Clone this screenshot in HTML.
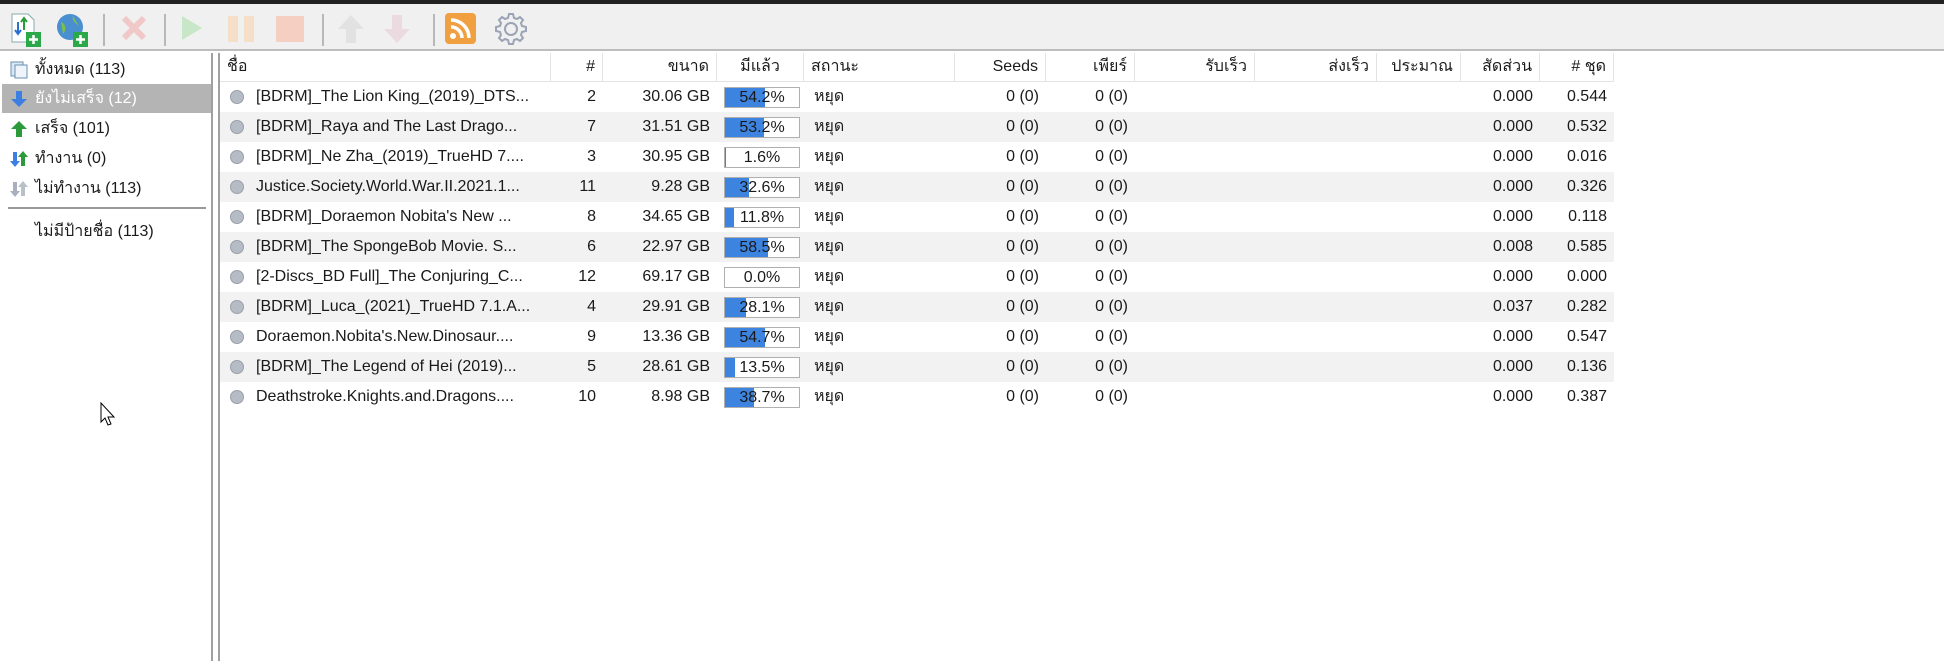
<!DOCTYPE html><html><head><meta charset="utf-8"><style>
*{margin:0;padding:0;box-sizing:border-box}
body{width:1944px;height:661px;background:#fff;font-family:"Liberation Sans","Noto Sans CJK SC",sans-serif;font-size:16px;color:#1a1a1a;position:relative;overflow:hidden}
.top{position:absolute;left:0;top:0;width:1944px;height:4px;background:#222}
.tb{position:absolute;left:0;top:4px;width:1944px;height:47px;background:#f0f0f0;border-bottom:2px solid #bdbdbd}
.sep{position:absolute;top:10px;width:2px;height:32px;background:#b8b8b8}
.ic{position:absolute;top:8px}
.side{position:absolute;left:0;top:53px;width:213px;height:608px;border-right:2px solid #a0a0a0;background:#fff}
.si{position:absolute;left:2px;width:209px;height:29px;line-height:29px;padding-left:33px;font-size:16px}
.si.sel{background:#b4b4b4;color:#fff}
.si svg{position:absolute;left:8px;top:6px}
.main{position:absolute;left:218px;top:53px;width:1726px;height:608px;border-left:2px solid #a0a0a0}
.hd{position:absolute;top:0;height:29px;line-height:28px;border-right:1px solid #e3e3e3;border-bottom:1px solid #e3e3e3;padding:0 7px;font-size:16px;white-space:nowrap}
.row{position:absolute;left:0;width:1394px;height:30px;line-height:30px}
.row.g{background:#f2f2f2}
.c{position:absolute;top:0;white-space:nowrap;overflow:hidden}
.r{text-align:right}
.dot{position:absolute;left:10px;top:8px;width:14px;height:14px;border-radius:50%;background:#b6bcc6;border:1px solid #9aa0a8}
.pb{position:absolute;left:504px;top:5px;width:76px;height:21px;border:1px solid #b0b0b0;background:#fff;text-align:center;line-height:19px}
.pb i{position:absolute;left:0;top:0;bottom:0;background:#3d84e0}
.pb span{position:relative}
</style></head><body>
<div class="top"></div>
<div class="tb">
<svg class="ic" style="left:8px" width="36" height="36" viewBox="0 0 36 36"><path d="M4 2h16l6 6v22H4z" fill="#fff" stroke="#8aa" /><path d="M10 10v12M7 18l3 4 3-4" stroke="#2a6fd0" stroke-width="2" fill="none"/><path d="M16 18V6M13 10l3-4 3 4" stroke="#2a9a3a" stroke-width="2" fill="none"/><rect x="18" y="20" width="15" height="15" fill="#2aa84a"/><path d="M25.5 23v9M21 27.5h9" stroke="#fff" stroke-width="2.5"/></svg>
<svg class="ic" style="left:55px" width="36" height="36" viewBox="0 0 36 36"><circle cx="15" cy="15" r="13" fill="#4a8fd0"/><path d="M6 10c5 2 6 8 2 12M18 4c-2 6 6 8 8 14" fill="#7cbf4a"/><rect x="18" y="20" width="15" height="15" fill="#2aa84a"/><path d="M25.5 23v9M21 27.5h9" stroke="#fff" stroke-width="2.5"/></svg>
<div class="sep" style="left:103px"></div>
<svg class="ic" style="left:118px" width="32" height="32" viewBox="0 0 32 32"><path d="M6 6l20 20M26 6L6 26" stroke="#f0c8c8" stroke-width="6"/></svg>
<div class="sep" style="left:164px"></div>
<svg class="ic" style="left:178px" width="28" height="32" viewBox="0 0 28 32"><path d="M4 4l20 12L4 28z" fill="#c8e6c8"/></svg>
<svg class="ic" style="left:224px" width="34" height="32" viewBox="0 0 34 32"><rect x="4" y="4" width="10" height="26" fill="#f6dfc8"/><rect x="20" y="4" width="10" height="26" fill="#f6dfc8"/></svg>
<svg class="ic" style="left:273px" width="34" height="32" viewBox="0 0 34 32"><rect x="3" y="4" width="28" height="26" fill="#f4cfc2"/></svg>
<div class="sep" style="left:322px"></div>
<svg class="ic" style="left:334px" width="34" height="34" viewBox="0 0 34 34"><path d="M17 3L4 17h8v14h10V17h8z" fill="#e2e2e2"/></svg>
<svg class="ic" style="left:380px" width="34" height="34" viewBox="0 0 34 34"><path d="M17 31L4 17h8V3h10v14h8z" fill="#ebdbe0"/></svg>
<div class="sep" style="left:433px"></div>
<svg class="ic" style="left:444px" width="33" height="33" viewBox="0 0 33 33"><rect x="1" y="1" width="31" height="31" rx="4" fill="#f0a040"/><circle cx="9" cy="24" r="3" fill="#fff"/><path d="M7 15a11 11 0 0 1 11 11M7 8a18 18 0 0 1 18 18" stroke="#fff" stroke-width="3.5" fill="none"/></svg>
<svg class="ic" style="left:494px" width="34" height="34" viewBox="0 0 34 34"><g fill="none" stroke="#9aa4b4" stroke-width="2"><circle cx="17" cy="17" r="6"/><path d="M15 2h4l1 4 3 1 3-2 3 3-2 3 1 3 4 1v4l-4 1-1 3 2 3-3 3-3-2-3 1-1 4h-4l-1-4-3-1-3 2-3-3 2-3-1-3-4-1v-4l4-1 1-3-2-3 3-3 3 2 3-1z"/></g></svg>
</div>
<div class="side">
<div class="si" style="top:2px"><svg width="18" height="18"><rect x="1" y="1" width="12" height="14" fill="#dbe8f4" stroke="#6a8fb0"/><rect x="5" y="4" width="12" height="13" fill="#eef4fa" stroke="#6a8fb0"/></svg>ทั้งหมด (113)</div>
<div class="si sel" style="top:31px"><svg width="18" height="18"><path d="M9 17L1 9h5V1h6v8h5z" fill="#3c7fe0"/></svg>ยังไม่เสร็จ (12)</div>
<div class="si" style="top:61px"><svg width="18" height="18"><path d="M9 1L1 9h5v8h6V9h5z" fill="#2a9a3a"/></svg>เสร็จ (101)</div>
<div class="si" style="top:91px"><svg width="18" height="18"><path d="M5 17L0 11h3V2h4v9h3z" fill="#3c7fe0"/><path d="M13 1l5 6h-3v9h-4V7H8z" fill="#2a9a3a"/></svg>ทำงาน (0)</div>
<div class="si" style="top:121px"><svg width="18" height="18"><path d="M5 17L0 11h3V2h4v9h3z" fill="#a8b0c0"/><path d="M13 1l5 6h-3v9h-4V7H8z" fill="#b8c0c8"/></svg>ไม่ทำงาน (113)</div>
<div style="position:absolute;left:8px;top:154px;width:198px;height:2px;background:#999"></div>
<div class="si" style="top:164px">ไม่มีป้ายชื่อ (113)</div>
<svg style="position:absolute;left:100px;top:349px" width="16" height="24" viewBox="0 0 16 24"><path d="M1 1v19l4-4 3 7 3-1-3-7h6z" fill="#fff" stroke="#000"/></svg>
</div>
<div class="main">
<div class="hd" style="left:0;width:331px">ชื่อ</div>
<div class="hd r" style="left:331px;width:52px">#</div>
<div class="hd r" style="left:383px;width:114px">ขนาด</div>
<div class="hd" style="left:497px;width:87px;text-align:center">มีแล้ว</div>
<div class="hd" style="left:584px;width:151px">สถานะ</div>
<div class="hd r" style="left:735px;width:91px">Seeds</div>
<div class="hd r" style="left:826px;width:89px">เพียร์</div>
<div class="hd r" style="left:915px;width:120px">รับเร็ว</div>
<div class="hd r" style="left:1035px;width:122px">ส่งเร็ว</div>
<div class="hd r" style="left:1157px;width:84px">ประมาณ</div>
<div class="hd r" style="left:1241px;width:79px">สัดส่วน</div>
<div class="hd r" style="left:1320px;width:74px"># ชุด</div>
<div id="rows"></div>
</div>
<script>
var d=[["[BDRM]_The Lion King_(2019)_DTS...","2","30.06 GB",54.2,"0.000","0.544"],
["[BDRM]_Raya and The Last Drago...","7","31.51 GB",53.2,"0.000","0.532"],
["[BDRM]_Ne Zha_(2019)_TrueHD 7....","3","30.95 GB",1.6,"0.000","0.016"],
["Justice.Society.World.War.II.2021.1...","11","9.28 GB",32.6,"0.000","0.326"],
["[BDRM]_Doraemon Nobita's New ...","8","34.65 GB",11.8,"0.000","0.118"],
["[BDRM]_The SpongeBob Movie. S...","6","22.97 GB",58.5,"0.008","0.585"],
["[2-Discs_BD Full]_The Conjuring_C...","12","69.17 GB",0.0,"0.000","0.000"],
["[BDRM]_Luca_(2021)_TrueHD 7.1.A...","4","29.91 GB",28.1,"0.037","0.282"],
["Doraemon.Nobita's.New.Dinosaur....","9","13.36 GB",54.7,"0.000","0.547"],
["[BDRM]_The Legend of Hei (2019)...","5","28.61 GB",13.5,"0.000","0.136"],
["Deathstroke.Knights.and.Dragons....","10","8.98 GB",38.7,"0.000","0.387"]];
var h="";d.forEach(function(r,i){h+='<div class="row'+(i%2?' g':'')+'" style="top:'+(29+i*30)+'px"><span class="dot"></span>'+
'<div class="c" style="left:36px;width:290px">'+r[0]+'</div>'+
'<div class="c r" style="left:331px;width:45px">'+r[1]+'</div>'+
'<div class="c r" style="left:383px;width:107px">'+r[2]+'</div>'+
'<div class="pb"><i style="width:'+(r[3]*0.74)+'px"></i><span>'+r[3].toFixed(1)+'%</span></div>'+
'<div class="c" style="left:594px">หยุด</div>'+
'<div class="c r" style="left:735px;width:84px">0 (0)</div>'+
'<div class="c r" style="left:826px;width:82px">0 (0)</div>'+
'<div class="c r" style="left:1241px;width:72px">'+r[4]+'</div>'+
'<div class="c r" style="left:1320px;width:67px">'+r[5]+'</div></div>';});
document.getElementById("rows").innerHTML=h;
</script>
</body></html>
